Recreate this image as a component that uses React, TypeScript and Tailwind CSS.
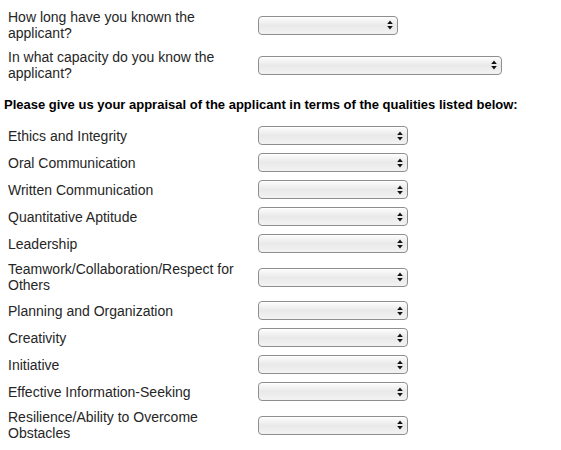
import React from 'react';

const topQuestions = [
    { label: 'How long have you known the applicant?', width: 'w-[140px]' },
    { label: 'In what capacity do you know the applicant?', width: 'w-[244px]' },
];

const qualities = [
    'Ethics and Integrity',
    'Oral Communication',
    'Written Communication',
    'Quantitative Aptitude',
    'Leadership',
    'Teamwork/Collaboration/Respect for Others',
    'Planning and Organization',
    'Creativity',
    'Initiative',
    'Effective Information-Seeking',
    'Resilience/Ability to Overcome Obstacles',
];

const FakeSelect = ({ width }: { width: string }) => (
    <div
        className={`${width} shrink-0 h-[19px] rounded-[4px] border border-[#8e8e8e] bg-gradient-to-b from-[#fdfdfd] via-[#e9e9e9] to-[#f3f3f3] shadow-[inset_0_1px_0_#fff] flex items-center justify-end pr-[4px]`}
    >
        <svg width="6" height="10" viewBox="0 0 6 10" className="block">
            <path d="M3 0.5 L5.8 4 L0.2 4 Z" fill="#111" />
            <path d="M3 9.5 L5.8 6 L0.2 6 Z" fill="#111" />
        </svg>
    </div>
);

const Row = ({ label, width }: { label: string; width: string }) => (
    <div className="flex items-center py-[4px]">
        <div className="w-[258px] shrink-0 pl-[8px] pr-[12px] text-[14px] leading-[16px]">{label}</div>
        <FakeSelect width={width} />
    </div>
);

export default function App() {
    return (
        <div
            className="w-[561px] h-[450px] bg-white text-[13px] text-[#262626] overflow-hidden pt-[5px]"
            style={{ fontFamily: '"Liberation Sans", Arial, Helvetica, sans-serif' }}
        >
            {topQuestions.map((q) => (
                <Row key={q.label} label={q.label} width={q.width} />
            ))}
            <div className="mt-[12px] mb-[9px] pl-[4px] font-bold leading-[16px] text-black">
                Please give us your appraisal of the applicant in terms of the qualities listed below:
            </div>
            {qualities.map((q) => (
                <Row key={q} label={q} width="w-[150px]" />
            ))}
        </div>
    );
}
